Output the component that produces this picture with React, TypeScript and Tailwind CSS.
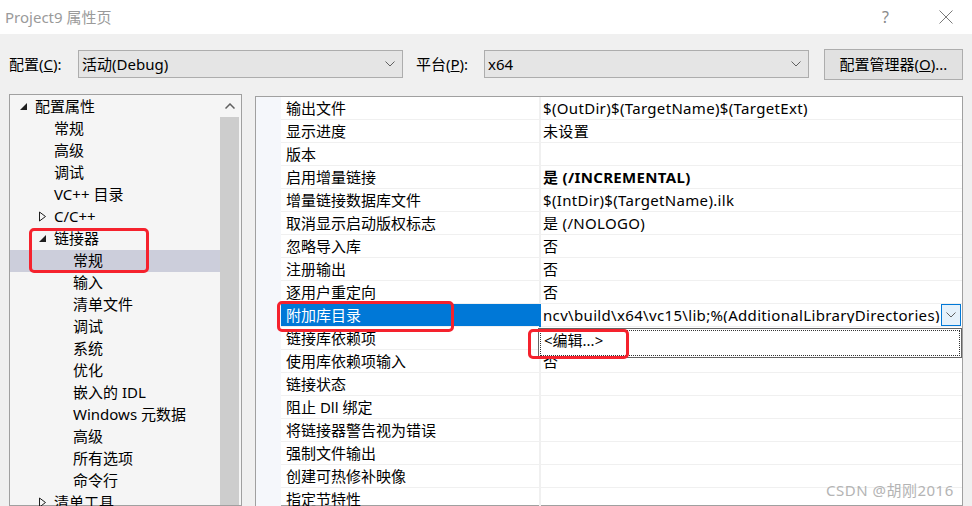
import React from "react";

const FONT = { fontFamily: '"Microsoft YaHei UI", "Noto Sans", "Noto Sans CJK SC", sans-serif' };

function Chevron({ className = "" }: { className?: string }) {
  return (
    <svg width="10" height="6" viewBox="0 0 10 6" className={className}>
      <path d="M0.5 0.5 L5 5 L9.5 0.5" fill="none" stroke="#606060" strokeWidth="1" />
    </svg>
  );
}

function Expanded() {
  return (
    <svg width="9" height="9" viewBox="0 0 9 9">
      <path d="M8 1 L8 8 L1 8 Z" fill="#1e1e1e" />
    </svg>
  );
}

function Collapsed() {
  return (
    <svg width="9" height="11" viewBox="0 0 9 11">
      <path d="M1.5 1 L7.5 5.5 L1.5 10 Z" fill="none" stroke="#1e1e1e" strokeWidth="1" />
    </svg>
  );
}

type TreeItem = { label: string; level: number; state?: "open" | "closed"; selected?: boolean };

const tree: TreeItem[] = [
  { label: "配置属性", level: 0, state: "open" },
  { label: "常规", level: 1 },
  { label: "高级", level: 1 },
  { label: "调试", level: 1 },
  { label: "VC++ 目录", level: 1 },
  { label: "C/C++", level: 1, state: "closed" },
  { label: "链接器", level: 1, state: "open" },
  { label: "常规", level: 2, selected: true },
  { label: "输入", level: 2 },
  { label: "清单文件", level: 2 },
  { label: "调试", level: 2 },
  { label: "系统", level: 2 },
  { label: "优化", level: 2 },
  { label: "嵌入的 IDL", level: 2 },
  { label: "Windows 元数据", level: 2 },
  { label: "高级", level: 2 },
  { label: "所有选项", level: 2 },
  { label: "命令行", level: 2 },
  { label: "清单工具", level: 1, state: "closed" },
];

type Prop = { name: string; value: string; bold?: boolean; selected?: boolean };

const props: Prop[] = [
  { name: "输出文件", value: "$(OutDir)$(TargetName)$(TargetExt)" },
  { name: "显示进度", value: "未设置" },
  { name: "版本", value: "" },
  { name: "启用增量链接", value: "是 (/INCREMENTAL)", bold: true },
  { name: "增量链接数据库文件", value: "$(IntDir)$(TargetName).ilk" },
  { name: "取消显示启动版权标志", value: "是 (/NOLOGO)" },
  { name: "忽略导入库", value: "否" },
  { name: "注册输出", value: "否" },
  { name: "逐用户重定向", value: "否" },
  { name: "附加库目录", value: "ncv\\build\\x64\\vc15\\lib;%(AdditionalLibraryDirectories)", selected: true },
  { name: "链接库依赖项", value: "" },
  { name: "使用库依赖项输入", value: "否" },
  { name: "链接状态", value: "" },
  { name: "阻止 Dll 绑定", value: "" },
  { name: "将链接器警告视为错误", value: "" },
  { name: "强制文件输出", value: "" },
  { name: "创建可热修补映像", value: "" },
  { name: "指定节特性", value: "" },
];

export default function App() {
  return (
    <div className="relative w-[972px] h-[506px] overflow-hidden flex flex-col bg-[#f0f0f0] text-[15px] text-black" style={FONT}>
      {/* Title bar */}
      <div className="h-[34px] bg-white flex items-center shrink-0">
        <span className="ml-[5px] text-[15px] text-[#9a9a9a]">Project9 属性页</span>
        <span className="ml-auto mr-[50px] text-[16px] text-[#8a8a8a]">?</span>
        <svg width="14" height="14" viewBox="0 0 14 14" className="mr-[19px]">
          <path d="M0.5 0.5 L13.5 13.5 M13.5 0.5 L0.5 13.5" stroke="#7a7a7a" strokeWidth="1" />
        </svg>
      </div>

      {/* Toolbar */}
      <div className="flex items-center h-[32px] mt-[14px] shrink-0">
        <span className="ml-[9px] w-[69px]">
          配置(<span className="underline">C</span>):
        </span>
        <div className="w-[325px] h-[28px] border border-[#adadad] bg-[#e5e5e5] flex items-center pl-[3px] pr-[7px]">
          <span>活动(Debug)</span>
          <Chevron className="ml-auto" />
        </div>
        <span className="ml-[13px] w-[68px]">
          平台(<span className="underline">P</span>):
        </span>
        <div className="w-[325px] h-[28px] border border-[#adadad] bg-[#e5e5e5] flex items-center pl-[3px] pr-[7px]">
          <span>x64</span>
          <Chevron className="ml-auto" />
        </div>
        <div className="ml-[15px] w-[139px] h-[31px] border border-[#adadad] bg-[#e1e1e1] flex items-center justify-center">
          配置管理器(<span className="underline">O</span>)...
        </div>
      </div>

      {/* Panels */}
      <div className="flex flex-1 mt-[14px] min-h-0">
        {/* Tree */}
        <div className="ml-[9px] w-[233px] border border-[#a0a0a0] bg-[#f5f5f5] flex">
          <div className="flex-1 pt-[1px]">
            {tree.map((t, i) => (
              <div
                key={i}
                className={`h-[22px] flex items-center leading-none pb-[1px] ${t.selected ? "bg-[#cccedb]" : ""} ${t.level === 0 ? "pl-[9px]" : t.level === 1 ? "pl-[28px]" : "pl-[47px]"}`}
              >
                <span className="w-[16px] h-[21px] flex items-center">
                  {t.state === "open" ? <Expanded /> : t.state === "closed" ? <Collapsed /> : null}
                </span>
                <span>{t.label}</span>
              </div>
            ))}
          </div>
          <div className="w-[19px] mr-[2px] flex flex-col">
            <div className="h-[22px] flex items-center justify-center">
              <svg width="10" height="6" viewBox="0 0 10 6">
                <path d="M0.5 5.5 L5 1 L9.5 5.5" fill="none" stroke="#606060" strokeWidth="1.5" />
              </svg>
            </div>
            <div className="flex-1 bg-[#cdcdcd]" />
          </div>
        </div>

        {/* Property grid */}
        <div className="ml-[13px] mt-[2px] w-[708px] border border-[#a0a0a0] bg-white flex flex-col">
          {props.map((p, i) => (
            <div key={i} className="h-[23px] flex shrink-0 leading-none">
              <div className="w-[25px] bg-[#f5f7fb]" />
              <div
                className={`w-[258px] flex items-center pl-[5px] border-b border-[#f0f0f0] ${p.selected ? "bg-[#0078d7] text-white" : ""}`}
              >
                {p.name}
              </div>
              <div className={`w-[2px] ${p.selected ? "bg-[#0078d7]" : "bg-[#f0f0f0]"}`} />
              {p.selected ? (
                <div className="flex-1 flex items-center border-b border-[#f0f0f0] min-w-0">
                  <span className="pl-[2px] whitespace-nowrap overflow-hidden flex-1 tracking-[0.33px]">{p.value}</span>
                  <div className="w-[20px] h-[22px] mr-[1px] border border-[#0078d7] bg-[#e5f1fb] flex items-center justify-center shrink-0">
                    <Chevron />
                  </div>
                </div>
              ) : (
                <div className={`flex-1 flex items-center pl-[2px] border-b border-[#f0f0f0] tracking-[0.33px] ${p.bold ? "font-bold" : ""}`}>
                  {p.value}
                </div>
              )}
            </div>
          ))}
        </div>
      </div>

      {/* Dropdown list overlay */}
      <div className="absolute left-[538px] top-[328px] w-[424px] h-[30px] bg-white border border-[#646464] p-[1px]">
        <div className="w-full h-full border border-dotted border-[#333] flex items-start pl-[3px] pt-[2px] leading-none">
          &lt;编辑...&gt;
        </div>
      </div>

      {/* Red annotation boxes */}
      <div className="absolute left-[29px] top-[228px] w-[120px] h-[45px] border-[3px] border-[#f5222d] rounded-[5px]" />
      <div className="absolute left-[277px] top-[301px] w-[177px] h-[31px] border-[3px] border-[#f5222d] rounded-[5px]" />
      <div className="absolute left-[528px] top-[329px] w-[101px] h-[30px] border-[3px] border-[#f5222d] rounded-[5px]" />

      {/* Watermark */}
      <div className="absolute left-[826px] top-[479px] text-[15px] text-[#b4b4b4] tracking-[0.5px]">CSDN @胡刚2016</div>
    </div>
  );
}
